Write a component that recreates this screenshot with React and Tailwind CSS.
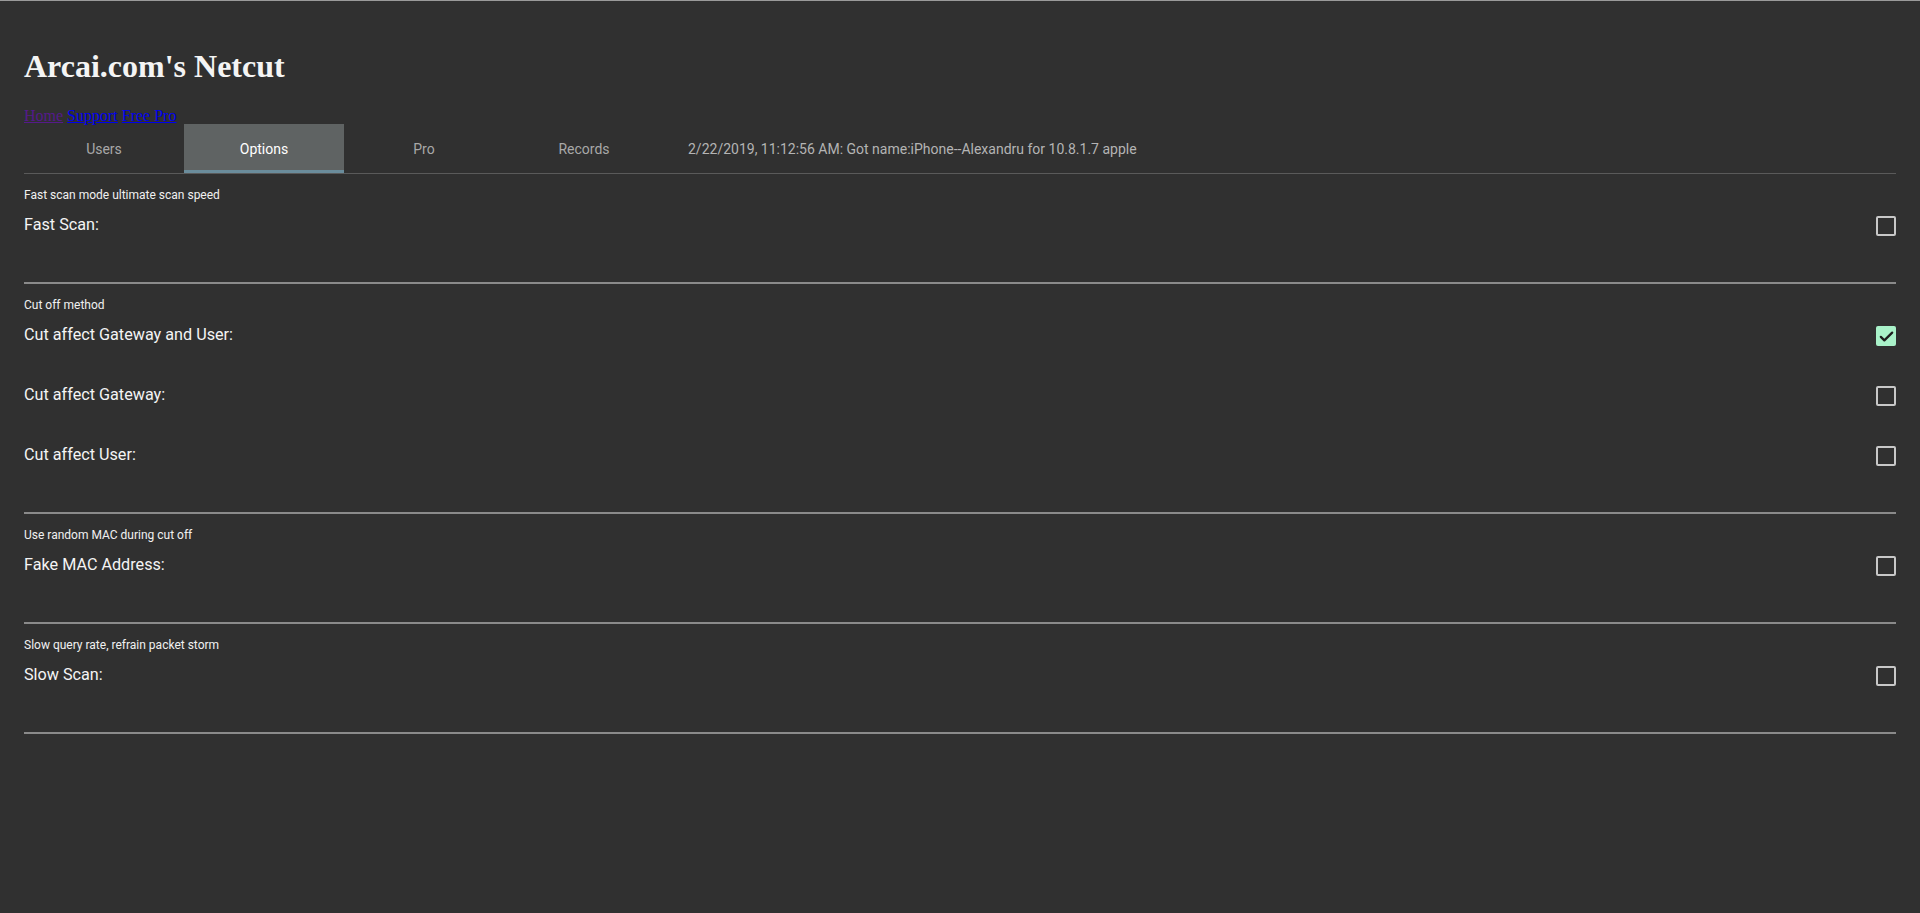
import React, { useState } from 'react';

const sections = [
  { caption: 'Fast scan mode ultimate scan speed', rows: [{ label: 'Fast Scan:', checked: false }] },
  {
    caption: 'Cut off method',
    rows: [
      { label: 'Cut affect Gateway and User:', checked: true },
      { label: 'Cut affect Gateway:', checked: false },
      { label: 'Cut affect User:', checked: false },
    ],
  },
  { caption: 'Use random MAC during cut off', rows: [{ label: 'Fake MAC Address:', checked: false }] },
  { caption: 'Slow query rate, refrain packet storm', rows: [{ label: 'Slow Scan:', checked: false }] },
];

const tabs = ['Users', 'Options', 'Pro', 'Records'];

function Checkbox({ checked }) {
  if (checked) {
    return (
      <div className="w-[20px] h-[20px] mt-[1px] rounded-[2px] bg-[#a9f2c9] flex items-center justify-center">
        <svg width="17" height="17" viewBox="0 0 24 24" fill="none" stroke="#1e1e1e" strokeWidth="3.2" strokeLinecap="round" strokeLinejoin="round">
          <path d="M4 12.5l5 5L20 6.5" />
        </svg>
      </div>
    );
  }
  return <div className="w-[20px] h-[20px] mt-[1px] rounded-[2px] border-2 border-[#c8c8c8]" />;
}

export default function App() {
  const [active] = useState('Options');

  return (
    <div className="min-h-screen bg-[#303030] border-t border-[#9a9a9a] px-6 font-['Roboto',sans-serif]">
      <h1 className="pt-[47px] text-[32px] leading-[37px] font-bold text-[#f4f4f4] font-['Liberation_Serif',serif]">
        Arcai.com's Netcut
      </h1>
      <div className="mt-[23px] text-[16px] leading-[16px] font-['Liberation_Serif',serif]">
        <a href="#" className="underline text-[#551a8b]">Home</a>{' '}
        <a href="#" className="underline text-[#0000ee]">Support</a>{' '}
        <a href="#" className="underline text-[#0000ee]">Free Pro</a>
      </div>
      <div className="flex items-center h-[50px] border-b border-[#5a5a5a]">
        {tabs.map((t) =>
          t === active ? (
            <div key={t} className="w-[160px] h-full flex items-center justify-center bg-[#5f6363] border-b-[3px] border-[#6a8c9b] pt-[4px] text-[14px] text-white">
              {t}
            </div>
          ) : (
            <div key={t} className="w-[160px] h-full flex items-center justify-center pt-[1px] text-[14px] text-[#a8a8a8]">
              {t}
            </div>
          )
        )}
        <div className="ml-6 pt-[1px] text-[14px] text-[#b4b4b4]">
          2/22/2019, 11:12:56 AM: Got name:iPhone--Alexandru for 10.8.1.7 apple
        </div>
      </div>
      {sections.map((s) => (
        <div key={s.caption} className="pt-[13px] pb-[7px] border-b-2 border-[#8a8a8a]">
          <div className="text-[12px] leading-[16px] text-[#f0f0f0]">{s.caption}</div>
          <div className="mt-[12px]">
            {s.rows.map((r) => (
              <div key={r.label} className="h-[60px] flex items-start justify-between">
                <div className="text-[16.2px] leading-[20px] text-[#f4f4f4]">{r.label}</div>
                <Checkbox checked={r.checked} />
              </div>
            ))}
          </div>
        </div>
      ))}
    </div>
  );
}
